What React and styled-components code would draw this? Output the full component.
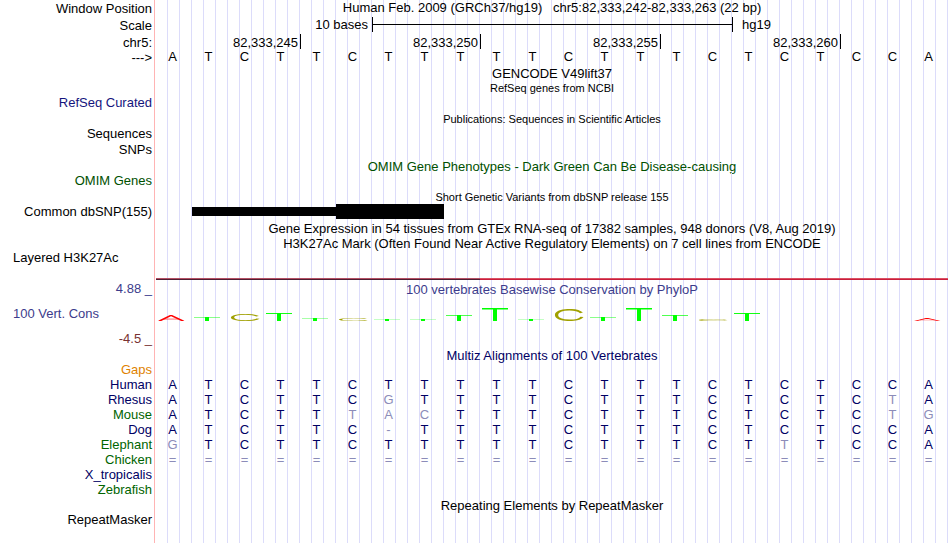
import React from 'react';
import styled, { createGlobalStyle, css } from 'styled-components';

const GlobalStyle = createGlobalStyle`
  body {
    margin: 0;
    background: #fff;
  }
`;

const BASE_COUNT = 22;

const Browser = styled.main`
  display: flex;
  flex-direction: column;
  min-width: 800px;
  min-height: 100vh;
  font-family: 'Liberation Sans', Arial, Helvetica, sans-serif;
  font-size: 13px;
  line-height: 15px;
  color: #000;
  white-space: nowrap;
`;

const TrackRow = styled.section`
  display: grid;
  grid-template-columns: 155px 1fr;
  column-gap: 1px;
  padding-right: 2px;
  height: ${props => props.height}px;
  ${props =>
    props.fill &&
    css`
      flex: 1 0 auto;
    `}
`;

const Label = styled.div`
  display: flex;
  align-items: ${props => (props.bottom ? 'flex-end' : 'flex-start')};
  justify-content: ${props => (props.left ? 'flex-start' : 'flex-end')};
  padding-left: 13px;
  padding-right: 2px;
  padding-top: ${props => (props.ruler ? 1 : 0)}px;
  border-right: 1px solid #ffb4b4;
  color: ${props => props.color || '#000'};
`;

/* three guide lines for every base */
const Data = styled.div`
  display: grid;
  grid-template-columns: repeat(${BASE_COUNT}, minmax(0, 1fr));
  align-items: ${props => (props.bottom ? 'end' : 'start')};
  background-image: linear-gradient(
    to right,
    transparent calc(100% - 1px),
    #dcdcfa calc(100% - 1px)
  );
  background-size: calc(100% / ${BASE_COUNT * 3}) 100%;
`;

const Title = styled.h2`
  grid-column: 1 / -1;
  margin: 0;
  font-size: ${props => (props.small ? 11 : 13)}px;
  line-height: ${props => (props.small ? 14 : 15)}px;
  font-weight: normal;
  text-align: center;
  white-space: pre;
  color: ${props => props.color || '#000'};
`;

const ScaleText = styled.span`
  grid-column: ${props => props.$cols};
  text-align: ${props => props.$align};
  padding-left: 10px;
  padding-right: 4px;
`;

const ScaleBar = styled.div`
  grid-column: 7 / 17;
  display: flex;
  align-items: center;
  height: 15px;
  margin-right: -1px;
  border-left: 1px solid #000;
  border-right: 1px solid #000;

  &::before {
    content: '';
    flex: 1;
    height: 1px;
    background: #000;
  }
`;

const Coordinate = styled.span`
  grid-column: ${props => props.$cols};
  height: 15px;
  line-height: 17px;
  margin-right: -1px;
  padding-right: 2px;
  border-right: 1px solid #000;
  text-align: right;
`;

const Base = styled.span`
  padding-right: 3px;
  text-align: center;
  color: ${props => props.color};
`;

const Variant = styled.div`
  grid-column: ${props => props.$cols};
  align-self: start;
  height: ${props => (props.$thick ? 15 : 9)}px;
  margin-top: ${props => (props.$thick ? 0 : 3)}px;
  background: #000;
`;

const Signal = styled.div`
  grid-column: ${props => props.$cols};
  height: 2px;
  background: ${props => props.$dark};
  border-top: 1px solid ${props => props.$light};
  box-sizing: border-box;
`;

const LogoMark = styled.svg`
  display: block;
  width: 100%;
  height: ${props => props.$score}px;
`;

const NAVY = '#000064';
const GREEN = '#006400';
const FADED = '#8c8cb9';
const PHYLOP = '#3c3c8c';

const REFERENCE = 'ATCTTCTTTTTCTTTCTCTCCA';

const COORDINATES = [
  { text: '82,333,245', cols: '1 / 5' },
  { text: '82,333,250', cols: '5 / 10' },
  { text: '82,333,255', cols: '10 / 15' },
  { text: '82,333,260', cols: '15 / 20' }
];

const SPECIES = [
  { name: 'Human', color: NAVY, bases: 'ATCTTCTTTTTCTTTCTCTCCA' },
  { name: 'Rhesus', color: NAVY, bases: 'ATCTTCGTTTTCTTTCTCTCTA' },
  { name: 'Mouse', color: GREEN, bases: 'ATCTTTACTTTCTTTCTCTCTG' },
  { name: 'Dog', color: NAVY, bases: 'ATCTTC-TTTTCTTTCTCTCCA' },
  { name: 'Elephant', color: GREEN, bases: 'GTCTTCTTTTTCTTTCTTTCCA' },
  { name: 'Chicken', color: GREEN, bases: '======================' },
  { name: 'X_tropicalis', color: NAVY, bases: '' },
  { name: 'Zebrafish', color: GREEN, bases: '', height: 16 }
];

// height in pixels of the conservation mark over each base
const SCORES = [6, 4, 7, 8, 3, 3, 2, 2, 6, 13, 2, 12, 4, 13, 6, 2, 8, 0, 0, 0, 0, 3];

function Mark({ base, score }) {
  return (
    <LogoMark $score={score} viewBox="0 0 36 26" preserveAspectRatio="none" aria-hidden="true">
      {base === 'T' && (
        <g fill="#00ff00">
          <rect x="2" y="0" width="26" height="3" />
          <rect x="13" y="0" width="4" height="26" />
        </g>
      )}
      {base === 'C' && (
        <path
          d="M29.5 8.5C27 3.5 22.500 1.500 17.500 1.500C9.500 1.500 4.500 6 4.500 13S9.500 24.500 17.500 24.500C23.500 24.500 28.500 22 30 17"
          fill="none"
          stroke="#a0a000"
          strokeWidth="3.2"
        />
      )}
      {base === 'A' && (
        <g fill="none" stroke="#ff0000" strokeWidth="3.2">
          <path d="M3.500 26L15 1.500L27 26" />
          <path d="M8 17.500H22.500" strokeWidth="2.500" />
        </g>
      )}
    </LogoMark>
  );
}

function BaseRow({ bases, color }) {
  return bases.split('').map((base, i) => (
    <Base key={i} color={color || (base === REFERENCE[i] ? NAVY : FADED)}>
      {base}
    </Base>
  ));
}

function TitleRow({ height, small, color, children }) {
  return (
    <TrackRow height={height}>
      <Label />
      <Data>
        <Title small={small} color={color}>{children}</Title>
      </Data>
    </TrackRow>
  );
}

function LabelRow({ height, color, left, children }) {
  return (
    <TrackRow height={height}>
      <Label color={color} left={left}>{children}</Label>
      <Data />
    </TrackRow>
  );
}

function Ruler() {
  return (
    <>
      <TrackRow height={17}>
        <Label ruler>Window Position</Label>
        <Data>
          <Title>{'Human Feb. 2009 (GRCh37/hg19)   chr5:82,333,242-82,333,263 (22 bp)'}</Title>
        </Data>
      </TrackRow>
      <TrackRow height={17}>
        <Label ruler>Scale</Label>
        <Data>
          <ScaleText $cols="1 / 7" $align="right">10 bases</ScaleText>
          <ScaleBar />
          <ScaleText $cols="17 / 20" $align="left">hg19</ScaleText>
        </Data>
      </TrackRow>
      <TrackRow height={15}>
        <Label ruler>chr5:</Label>
        <Data>
          {COORDINATES.map(({ text, cols }) => (
            <Coordinate key={text} $cols={cols}>{text}</Coordinate>
          ))}
        </Data>
      </TrackRow>
      <TrackRow height={17}>
        <Label ruler>{'--->'}</Label>
        <Data>
          <BaseRow bases={REFERENCE} color="#000" />
        </Data>
      </TrackRow>
    </>
  );
}

function Conservation() {
  return (
    <>
      <TrackRow height={3}>
        <Label />
        <Data>
          <Signal $cols="1 / 10" $dark="#501e32" $light="#b45064" />
          <Signal $cols="10 / -1" $dark="#c81e3c" $light="#dc5064" />
        </Data>
      </TrackRow>
      <TrackRow height={16}>
        <Label color={PHYLOP}>4.88 _</Label>
        <Data bottom>
          <Title color={PHYLOP}>100 vertebrates Basewise Conservation by PhyloP</Title>
        </Data>
      </TrackRow>
      <TrackRow height={24}>
        <Label color={PHYLOP} left bottom>100 Vert. Cons</Label>
        <Data bottom>
          {SCORES.map((score, i) => (
            <Mark key={i} base={REFERENCE[i]} score={score} />
          ))}
        </Data>
      </TrackRow>
      <TrackRow height={27}>
        <Label color="#783232">
          <Lower>-4.5 _</Lower>
        </Label>
        <Data />
      </TrackRow>
    </>
  );
}

const Lower = styled.span`
  padding-top: 10px;
`;

function Alignments() {
  return (
    <>
      <TrackRow height={29}>
        <Label color="#e08200" bottom>Gaps</Label>
        <Data>
          <Title color={NAVY}>Multiz Alignments of 100 Vertebrates</Title>
        </Data>
      </TrackRow>
      {SPECIES.map(({ name, color, bases, height }) => (
        <TrackRow key={name} height={height || 15}>
          <Label color={color}>{name}</Label>
          <Data>
            <BaseRow bases={bases} />
          </Data>
        </TrackRow>
      ))}
    </>
  );
}

function App() {
  return (
    <Browser>
      <GlobalStyle />
      <Ruler />
      <TitleRow height={15}>GENCODE V49lift37</TitleRow>
      <TitleRow height={14} small>RefSeq genes from NCBI</TitleRow>
      <LabelRow height={17} color="#14147d">RefSeq Curated</LabelRow>
      <TitleRow height={14} small>Publications: Sequences in Scientific Articles</TitleRow>
      <LabelRow height={16}>Sequences</LabelRow>
      <LabelRow height={17}>SNPs</LabelRow>
      <TitleRow height={14} color="#005000">
        OMIM Gene Phenotypes - Dark Green Can Be Disease-causing
      </TitleRow>
      <LabelRow height={17} color="#005000">OMIM Genes</LabelRow>
      <TitleRow height={14} small>Short Genetic Variants from dbSNP release 155</TitleRow>
      <TrackRow height={17}>
        <Label>Common dbSNP(155)</Label>
        <Data>
          <Variant $cols="2 / 6" />
          <Variant $cols="6 / 9" $thick />
        </Data>
      </TrackRow>
      <TitleRow height={15}>
        Gene Expression in 54 tissues from GTEx RNA-seq of 17382 samples, 948 donors (V8, Aug 2019)
      </TitleRow>
      <TitleRow height={14}>
        H3K27Ac Mark (Often Found Near Active Regulatory Elements) on 7 cell lines from ENCODE
      </TitleRow>
      <LabelRow height={28} left>Layered H3K27Ac</LabelRow>
      <Conservation />
      <Alignments />
      <TitleRow height={14}>Repeating Elements by RepeatMasker</TitleRow>
      <TrackRow height={15} fill>
        <Label>RepeatMasker</Label>
        <Data />
      </TrackRow>
    </Browser>
  );
}

export default App;
